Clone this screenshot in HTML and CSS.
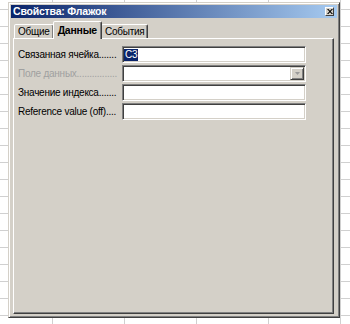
FILE: index.html
```html
<!DOCTYPE html>
<html lang="ru">
<head>
<meta charset="utf-8">
<title>Свойства: Флажок</title>
<link rel="stylesheet" href="styles.css">
</head>
<body>
<div class="dialog">
  <div class="titlebar">
    <span class="title">Свойства: Флажок</span>
    <span class="close"><svg width="6" height="5" viewBox="0 0 6 5"><path d="M0 0h1.4L3 1.8 4.6 0H6L3.7 2.5 6 5H4.6L3 3.2 1.4 5H0l2.3-2.5z" fill="#000"/></svg></span>
  </div>
  <div class="tabs">
    <div class="tab">Общие</div>
    <div class="tab active">Данные</div>
    <div class="tab">События</div>
  </div>
  <div class="panel">
    <div class="row">
      <div class="label">Связанная ячейка.......</div>
      <div class="field"><span class="sel">C3</span></div>
    </div>
    <div class="row">
      <div class="label disabled">Поле данных................</div>
      <div class="field combo"><span class="drop"><svg width="5" height="3" viewBox="0 0 5 3"><path d="M0 0h5L2.5 3z" fill="#9a9a9a"/></svg></span></div>
    </div>
    <div class="row">
      <div class="label">Значение индекса.......</div>
      <div class="field"></div>
    </div>
    <div class="row">
      <div class="label">Reference value (off)....</div>
      <div class="field"></div>
    </div>
  </div>
</div>
</body>
</html>
```

FILE: styles.css
```css
html, body {
  margin: 0;
  padding: 0;
}
body {
  width: 350px;
  height: 324px;
  overflow: hidden;
  font-family: "Liberation Sans", Arial, sans-serif;
  font-size: 10px;
  letter-spacing: -0.25px;
  color: #000;
  background-color: #fff;
  background-image:
    linear-gradient(#d0d0d0 1px, transparent 1px),
    linear-gradient(90deg, #d0d0d0 1px, transparent 1px);
  background-size: 72px 17px;
  background-position: 52px 9px;
}
.dialog {
  margin: 2px 0 0 8px;
  width: 332px;
  height: 316px;
  box-sizing: border-box;
  background: #d4d0c8;
  border: 1px solid;
  border-color: #d4d0c8 #404040 #404040 #d4d0c8;
  box-shadow: inset 1px 1px #fff, inset -1px -1px #808080;
  padding: 2px;
  display: flex;
  flex-direction: column;
}
.titlebar {
  height: 13px;
  background: linear-gradient(90deg, #0a246a, #a6caf0);
  display: flex;
  align-items: center;
  justify-content: space-between;
  padding: 0 3px 0 2px;
}
.title {
  color: #fff;
  font-weight: bold;
  font-size: 10.5px;
  letter-spacing: -0.2px;
  line-height: 13px;
}
.close {
  width: 9px;
  height: 9px;
  box-sizing: border-box;
  background: #d4d0c8;
  border: 1px solid;
  border-color: #fff #404040 #404040 #fff;
  display: flex;
  align-items: center;
  justify-content: center;
}
.close svg { display: block; }
.tabs {
  display: flex;
  align-items: flex-end;
  padding-left: 3px;
  margin-top: 3px;
  height: 17px;
  position: relative;
  z-index: 1;
}
.tab {
  height: 14px;
  box-sizing: border-box;
  padding: 0 3px;
  line-height: 13px;
  border: 1px solid;
  border-bottom: 0;
  border-color: #fff #404040 transparent #fff;
  border-radius: 2px 2px 0 0;
  box-shadow: inset -1px 0 #808080;
  background: #d4d0c8;
}
.tab.active {
  height: 18px;
  margin: 0 -1px -1px;
  padding: 0 4px;
  line-height: 16px;
  font-weight: bold;
  font-size: 10.5px;
  position: relative;
  z-index: 2;
}
.panel {
  margin: 0 3px 1px 2px;
  flex: 1;
  box-sizing: border-box;
  border: 1px solid;
  border-color: #fff #404040 #404040 #fff;
  box-shadow: inset -1px -1px #808080;
  padding: 7px 0 0 4px;
  display: flex;
  flex-direction: column;
  gap: 2px;
}
.row {
  display: flex;
  align-items: center;
  height: 17px;
}
.label {
  width: 104px;
  white-space: nowrap;
  flex: none;
}
.label.disabled {
  color: #a0a0a0;
}
.field {
  width: 184px;
  height: 17px;
  box-sizing: border-box;
  background: #fff;
  border: 1px solid;
  border-color: #808080 #fff #fff #808080;
  box-shadow: inset 1px 1px #404040, inset -1px -1px #d4d0c8;
  padding: 2px 2px 2px 1px;
  display: flex;
  align-items: center;
}
.sel {
  background: #0a246a;
  color: #fff;
  line-height: 12px;
  padding: 0 1px;
}
.combo {
  justify-content: flex-end;
  padding: 1px;
}
.drop {
  width: 14px;
  height: 13px;
  box-sizing: border-box;
  background: #d4d0c8;
  border: 1px solid;
  border-color: #d4d0c8 #404040 #404040 #d4d0c8;
  box-shadow: inset 1px 1px #fff, inset -1px -1px #808080;
  display: flex;
  align-items: center;
  justify-content: center;
}
.drop svg { display: block; }
```
